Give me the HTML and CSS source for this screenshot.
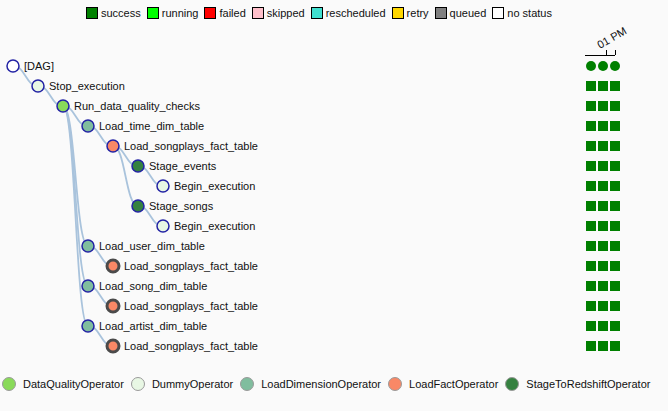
FILE: index.html
```html
<!DOCTYPE html>
<html>
<head>
<meta charset="utf-8">
<link rel="stylesheet" href="styles.css">
</head>
<body>
<div class="state-legend">
  <span class="state"><i class="sq success"></i>success</span>
  <span class="state"><i class="sq running"></i>running</span>
  <span class="state"><i class="sq failed"></i>failed</span>
  <span class="state"><i class="sq skipped"></i>skipped</span>
  <span class="state"><i class="sq rescheduled"></i>rescheduled</span>
  <span class="state"><i class="sq retry"></i>retry</span>
  <span class="state"><i class="sq queued"></i>queued</span>
  <span class="state"><i class="sq nostatus"></i>no status</span>
</div>
<svg class="tree" width="668" height="345" viewBox="0 20 668 345" xmlns="http://www.w3.org/2000/svg">
  <g class="links">
    <path d="M13,66C25.5,66 25.5,86 38,86"/>
    <path d="M38,86C50.5,86 50.5,106 63,106"/>
    <path d="M63,106C75.5,106 75.5,126 88,126"/>
    <path d="M88,126C100.5,126 100.5,146 113,146"/>
    <path d="M113,146C125.5,146 125.5,166 138,166"/>
    <path d="M138,166C150.5,166 150.5,186 163,186"/>
    <path d="M113,146C125.5,146 125.5,206 138,206"/>
    <path d="M138,206C150.5,206 150.5,226 163,226"/>
    <path d="M63,106C75.5,106 75.5,246 88,246"/>
    <path d="M88,246C100.5,246 100.5,266 113,266"/>
    <path d="M63,106C75.5,106 75.5,286 88,286"/>
    <path d="M88,286C100.5,286 100.5,306 113,306"/>
    <path d="M63,106C75.5,106 75.5,326 88,326"/>
    <path d="M88,326C100.5,326 100.5,346 113,346"/>
  </g>
  <g class="nodes">
    <circle class="node" cx="13" cy="66" r="6" fill="#ffffff"/>
    <text x="24" y="70">[DAG]</text>
    <circle class="node" cx="38" cy="86" r="6" fill="#e8f7e4"/>
    <text x="49" y="90">Stop_execution</text>
    <circle class="node" cx="63" cy="106" r="6" fill="#89da59"/>
    <text x="74" y="110">Run_data_quality_checks</text>
    <circle class="node" cx="88" cy="126" r="6" fill="#80bd9e"/>
    <text x="99" y="130">Load_time_dim_table</text>
    <circle class="node" cx="113" cy="146" r="6" fill="#f98866"/>
    <text x="124" y="150">Load_songplays_fact_table</text>
    <circle class="node" cx="138" cy="166" r="6" fill="#358140"/>
    <text x="149" y="170">Stage_events</text>
    <circle class="node" cx="163" cy="186" r="6" fill="#e8f7e4"/>
    <text x="174" y="190">Begin_execution</text>
    <circle class="node" cx="138" cy="206" r="6" fill="#358140"/>
    <text x="149" y="210">Stage_songs</text>
    <circle class="node" cx="163" cy="226" r="6" fill="#e8f7e4"/>
    <text x="174" y="230">Begin_execution</text>
    <circle class="node" cx="88" cy="246" r="6" fill="#80bd9e"/>
    <text x="99" y="250">Load_user_dim_table</text>
    <circle class="node collapsed" cx="113" cy="266" r="6" fill="#f98866"/>
    <text x="124" y="270">Load_songplays_fact_table</text>
    <circle class="node" cx="88" cy="286" r="6" fill="#80bd9e"/>
    <text x="99" y="290">Load_song_dim_table</text>
    <circle class="node collapsed" cx="113" cy="306" r="6" fill="#f98866"/>
    <text x="124" y="310">Load_songplays_fact_table</text>
    <circle class="node" cx="88" cy="326" r="6" fill="#80bd9e"/>
    <text x="99" y="330">Load_artist_dim_table</text>
    <circle class="node collapsed" cx="113" cy="346" r="6" fill="#f98866"/>
    <text x="124" y="350">Load_songplays_fact_table</text>
  </g>
  <g class="axis">
    <path d="M585,55H615M606,50V55M615,50V55"/>
    <text transform="translate(600,49) rotate(-30)">01 PM</text>
  </g>
  <g class="runs">
    <circle cx="591" cy="66" r="5"/><circle cx="603" cy="66" r="5"/><circle cx="615" cy="66" r="5"/>
  </g>
  <g class="cells">
    <rect x="586" y="81" width="10" height="10"/><rect x="598" y="81" width="10" height="10"/><rect x="610" y="81" width="10" height="10"/>
    <rect x="586" y="101" width="10" height="10"/><rect x="598" y="101" width="10" height="10"/><rect x="610" y="101" width="10" height="10"/>
    <rect x="586" y="121" width="10" height="10"/><rect x="598" y="121" width="10" height="10"/><rect x="610" y="121" width="10" height="10"/>
    <rect x="586" y="141" width="10" height="10"/><rect x="598" y="141" width="10" height="10"/><rect x="610" y="141" width="10" height="10"/>
    <rect x="586" y="161" width="10" height="10"/><rect x="598" y="161" width="10" height="10"/><rect x="610" y="161" width="10" height="10"/>
    <rect x="586" y="181" width="10" height="10"/><rect x="598" y="181" width="10" height="10"/><rect x="610" y="181" width="10" height="10"/>
    <rect x="586" y="201" width="10" height="10"/><rect x="598" y="201" width="10" height="10"/><rect x="610" y="201" width="10" height="10"/>
    <rect x="586" y="221" width="10" height="10"/><rect x="598" y="221" width="10" height="10"/><rect x="610" y="221" width="10" height="10"/>
    <rect x="586" y="241" width="10" height="10"/><rect x="598" y="241" width="10" height="10"/><rect x="610" y="241" width="10" height="10"/>
    <rect x="586" y="261" width="10" height="10"/><rect x="598" y="261" width="10" height="10"/><rect x="610" y="261" width="10" height="10"/>
    <rect x="586" y="281" width="10" height="10"/><rect x="598" y="281" width="10" height="10"/><rect x="610" y="281" width="10" height="10"/>
    <rect x="586" y="301" width="10" height="10"/><rect x="598" y="301" width="10" height="10"/><rect x="610" y="301" width="10" height="10"/>
    <rect x="586" y="321" width="10" height="10"/><rect x="598" y="321" width="10" height="10"/><rect x="610" y="321" width="10" height="10"/>
    <rect x="586" y="341" width="10" height="10"/><rect x="598" y="341" width="10" height="10"/><rect x="610" y="341" width="10" height="10"/>
  </g>
</svg>
<div class="op-legend">
  <span class="op"><i class="dot dq"></i>DataQualityOperator</span>
  <span class="op"><i class="dot dummy"></i>DummyOperator</span>
  <span class="op"><i class="dot loaddim"></i>LoadDimensionOperator</span>
  <span class="op"><i class="dot loadfact"></i>LoadFactOperator</span>
  <span class="op"><i class="dot stage"></i>StageToRedshiftOperator</span>
</div>
</body>
</html>
```
FILE: styles.css
```css
html, body {
  margin: 0;
  padding: 0;
  background: #fafafa;
}
body {
  width: 668px;
  height: 411px;
  overflow: hidden;
  font-family: "Liberation Sans", Arial, sans-serif;
  font-size: 11px;
  color: #111;
}
.state-legend {
  display: flex;
  align-items: center;
  gap: 6px;
  height: 15px;
  padding: 5px 0 0 86px;
  line-height: 12px;
}
.state {
  display: flex;
  align-items: center;
  gap: 3px;
}
.sq {
  display: block;
  width: 10px;
  height: 10px;
  border: 1px solid #000;
}
.success { background: #008000; }
.running { background: #00ff00; }
.failed { background: #ff0000; }
.skipped { background: #ffc0cb; }
.rescheduled { background: #40e0d0; }
.retry { background: #ffd700; }
.queued { background: #808080; }
.nostatus { background: #ffffff; }

.tree {
  display: block;
  font-family: "Liberation Sans", Arial, sans-serif;
  font-size: 11px;
}
.links path {
  fill: none;
  stroke: #a9c3dc;
  stroke-width: 1.8px;
}
.node {
  stroke: #2222a4;
  stroke-width: 1.5px;
}
.node.collapsed {
  stroke: #4a4a4a;
  stroke-width: 3px;
}
.nodes text {
  fill: #111;
}
.axis path {
  fill: none;
  stroke: #000;
  stroke-width: 1px;
  shape-rendering: crispEdges;
}
.axis text {
  fill: #111;
  font-size: 11px;
}
.runs circle {
  fill: #008000;
}
.cells rect {
  fill: #008000;
}

.op-legend {
  display: flex;
  align-items: center;
  gap: 7px;
  padding: 12px 0 0 2px;
  line-height: 14px;
}
.op {
  display: flex;
  align-items: center;
  gap: 7px;
}
.dot {
  display: block;
  width: 14px;
  height: 14px;
  box-sizing: border-box;
  border-radius: 50%;
  border: 1px solid #9a9a9a;
}
.dq { background: #89da59; }
.dummy { background: #e8f7e4; }
.loaddim { background: #80bd9e; }
.loadfact { background: #f98866; }
.stage { background: #358140; }
```
